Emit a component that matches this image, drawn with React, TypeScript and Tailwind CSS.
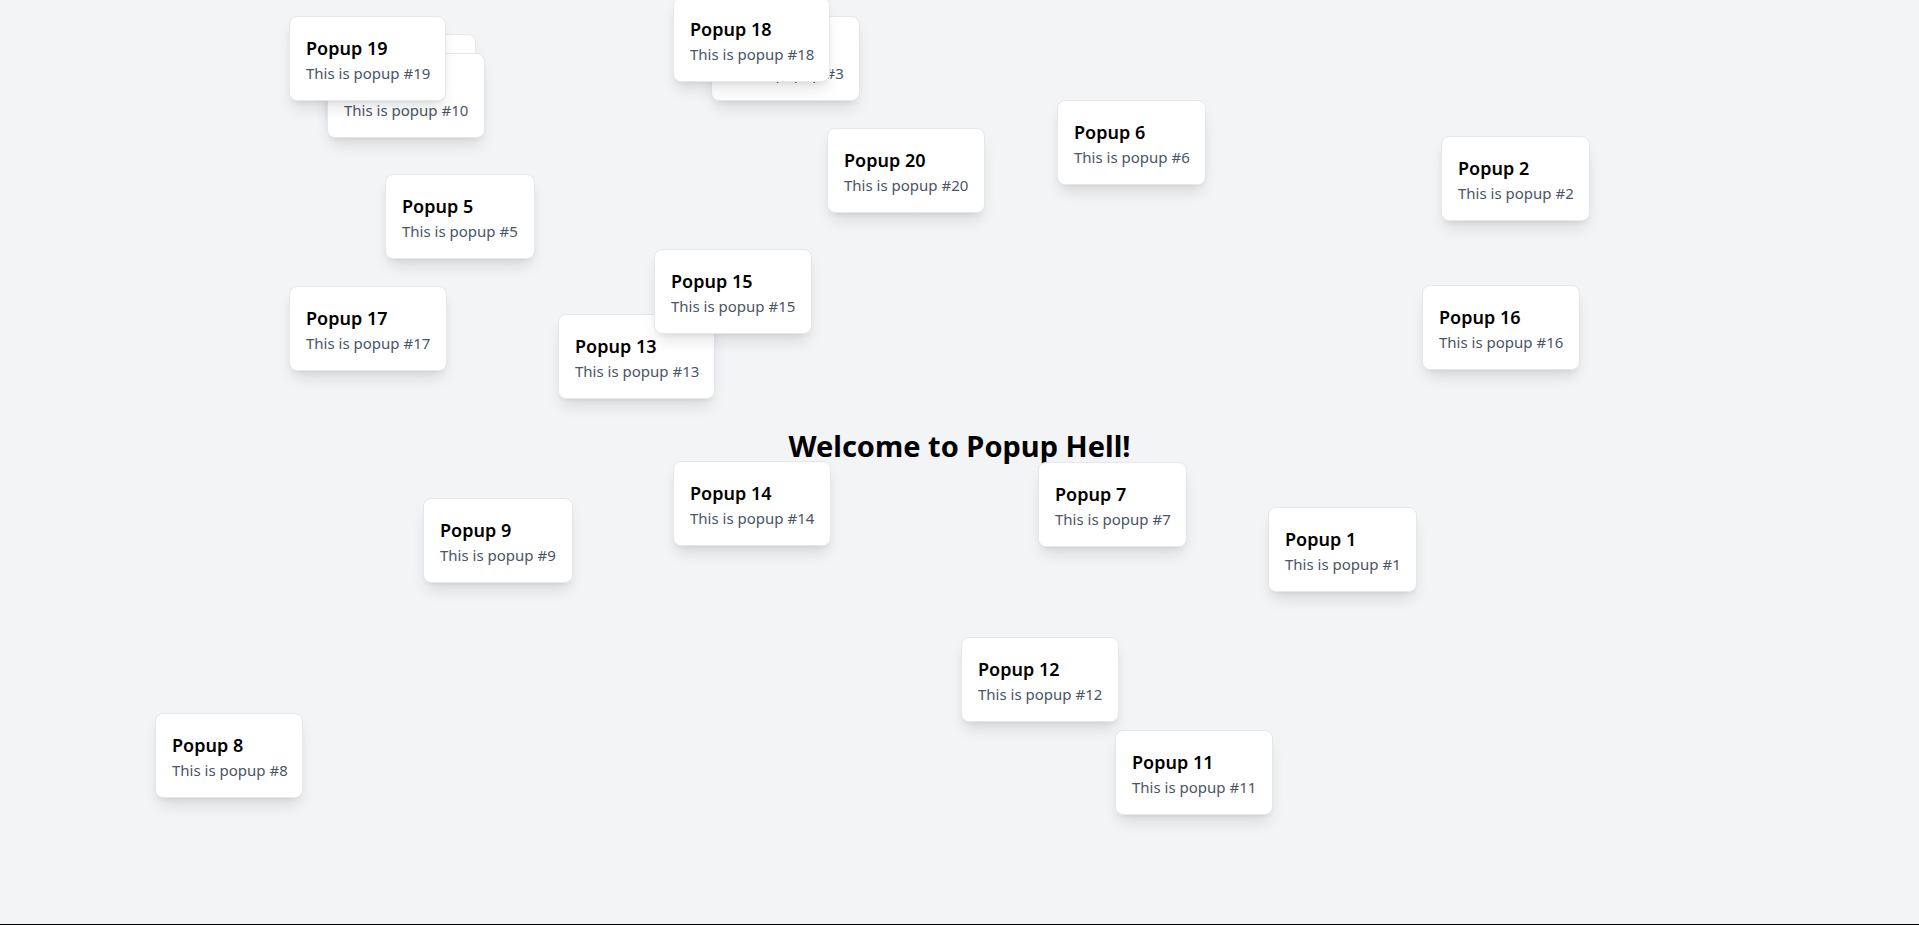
const popups = [
  { id: 1, x: 1268, y: 507, w: 149 },
  { id: 2, x: 1441, y: 136, w: 149 },
  { id: 3, x: 711, y: 16, w: 149 },
  { id: 4, x: 327, y: 34, w: 149 },
  { id: 5, x: 385, y: 174, w: 150 },
  { id: 6, x: 1057, y: 100, w: 149 },
  { id: 7, x: 1038, y: 462, w: 149 },
  { id: 8, x: 155, y: 713, w: 148 },
  { id: 9, x: 423, y: 498, w: 150 },
  { id: 10, x: 327, y: 53, w: 158 },
  { id: 11, x: 1115, y: 730, w: 158 },
  { id: 12, x: 961, y: 637, w: 158 },
  { id: 13, x: 558, y: 314, w: 157 },
  { id: 14, x: 673, y: 461, w: 158 },
  { id: 15, x: 654, y: 249, w: 158 },
  { id: 16, x: 1422, y: 285, w: 158 },
  { id: 17, x: 289, y: 286, w: 158 },
  { id: 18, x: 673, y: -3, w: 157 },
  { id: 19, x: 289, y: 16, w: 157 },
  { id: 20, x: 827, y: 128, w: 158 },
]

function Popup({ id, x, y, w }: { id: number; x: number; y: number; w: number }) {
  return (
    <div
      className="absolute h-[85px] rounded-lg border border-gray-200 bg-white px-4 pt-[17px] shadow-lg whitespace-nowrap"
      style={{ left: x, top: y, width: w }}
    >
      <h2 className="mb-px text-lg leading-7 font-semibold text-black">Popup {id}</h2>
      <p className="text-[15px] leading-5 text-gray-600">This is popup #{id}</p>
    </div>
  )
}

export default function App() {
  return (
    <div className="font-['Noto_Sans',sans-serif]">
      <div className="relative h-[924px] overflow-hidden bg-gray-100">
        <div className="flex justify-center pt-[428px]">
          <h1 className="text-[29px] leading-9 font-bold text-black">Welcome to Popup Hell!</h1>
        </div>
        {popups.map((p) => (
          <Popup key={p.id} {...p} />
        ))}
      </div>
      <div className="h-px bg-black" />
    </div>
  )
}
